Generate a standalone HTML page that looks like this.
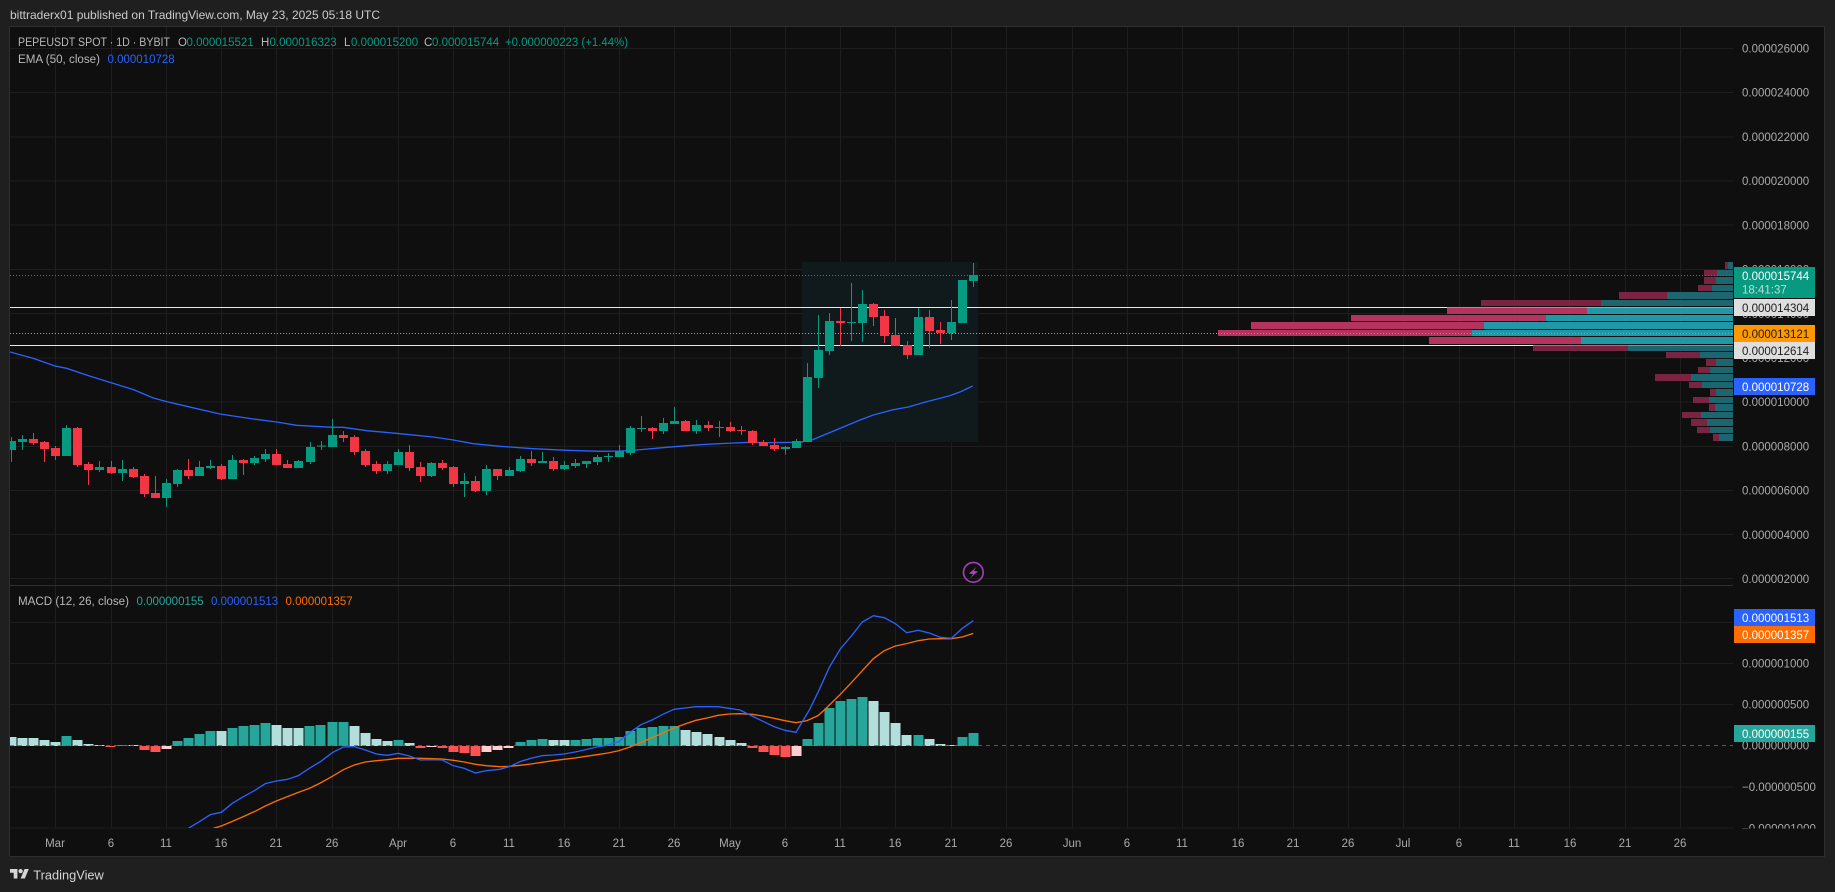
<!DOCTYPE html>
<html lang="en"><head><meta charset="utf-8"><title>PEPEUSDT chart</title>
<style>
html,body{margin:0;padding:0;background:#1f1f1f;width:1835px;height:892px;overflow:hidden}
svg{display:block}
text{font-family:"Liberation Sans",sans-serif;font-size:11.5px;fill:#ababab}
.w{fill:#fff}.k{fill:#1c1c1c}.d{text-anchor:middle}
.g{fill:#089981}.l{fill:#b8b8b8}
</style></head><body>
<svg width="1835" height="892" viewBox="0 0 1835 892" xmlns="http://www.w3.org/2000/svg">
<defs>
<clipPath id="c1"><rect x="30" y="81" width="5169" height="1671"/></clipPath>
<clipPath id="c2"><rect x="30" y="1758" width="5169" height="726"/></clipPath>
<clipPath id="c3"><rect x="1734" y="586" width="90" height="242.5"/></clipPath>
</defs>
<rect width="1835" height="892" fill="#1f1f1f"/>
<rect x="9.5" y="26.5" width="1815" height="830" fill="#0f0f0f" stroke="#2e2e2e"/>
<text x="10" y="19" textLength="370" lengthAdjust="spacingAndGlyphs" style="font-size:12px;fill:#cccccc">bittraderx01 published on TradingView.com, May 23, 2025 05:18 UTC</text>

<g transform="scale(.33333)" fill="none" shape-rendering="crispEdges">
<!-- grid -->
<path stroke="#1e1e1e" stroke-width="3" d="M30 145.500H5199M30 278H5199M30 410.500H5199M30 543H5199M30 675.500H5199M30 808H5199M30 940.500H5199M30 1073.500H5199M30 1206H5199M30 1339H5199M30 1471H5199M30 1604H5199M30 1736H5199M30 1867H5199M30 1990H5199M30 2113H5199M30 2361H5199M30 2484H5199M166 81V2484M334 81V2484M499 81V2484M664 81V2484M829 81V2484M997 81V2484M1195 81V2484M1360 81V2484M1528 81V2484M1693 81V2484M1858 81V2484M2023 81V2484M2191 81V2484M2356 81V2484M2521 81V2484M2686 81V2484M2854 81V2484M3019 81V2484M3217 81V2484M3382 81V2484M3547 81V2484M3715 81V2484M3880 81V2484M4045 81V2484M4210 81V2484M4378 81V2484M4543 81V2484M4708 81V2484M4876 81V2484M5041 81V2484"/>
<path stroke="#2e2e2e" stroke-width="3" d="M30 1756.500H5199"/>
<!-- shaded range -->
<rect x="2406" y="786" width="528" height="540" fill="#10191b"/>
<!-- white lines -->
<path stroke="#e8e8e8" stroke-width="3" d="M30 922.500H5199M30 1036.500H5199"/>
<!-- volume profile: sell -->
<path fill="#7a2441" d="M5175 786h9v21h-9zM5112 810h39v18h-39zM5112 831h36v21h-36zM5094 855h42v18h-42zM4857 876h144v21h-144zM4443 900h360v18h-360zM4599 1035h285v18h-285zM4998 1056h102v18h-102zM5118 1077h30v21h-30zM5094 1101h36v18h-36zM4965 1122h108v21h-108zM5067 1146h39v18h-39zM5130 1167h18v21h-18zM5079 1191h48v18h-48zM5127 1212h18v21h-18zM5046 1236h57v18h-57zM5073 1257h48v21h-48zM5091 1281h39v18h-39zM5139 1302h18v21h-18z"/>
<path fill="#1d6670" d="M5184 786h15v21h-15zM5151 810h48v18h-48zM5148 831h51v21h-51zM5136 855h63v18h-63zM5001 876h198v21h-198zM4803 900h396v18h-396zM4884 1035h315v18h-315zM5100 1056h99v18h-99zM5148 1077h51v21h-51zM5130 1101h69v18h-69zM5073 1122h126v21h-126zM5106 1146h93v18h-93zM5148 1167h51v21h-51zM5127 1191h72v18h-72zM5145 1212h54v21h-54zM5103 1236h96v18h-96zM5121 1257h78v21h-78zM5130 1281h69v18h-69zM5157 1302h42v21h-42z"/>
<path fill="#b5345f" d="M4341 921h420v21h-420zM4053 945h585v18h-585zM3753 966h699v21h-699zM3654 990h762v18h-762zM4287 1011h456v21h-456z"/>
<path fill="#2098a8" d="M4761 921h438v21h-438zM4638 945h561v18h-561zM4452 966h747v21h-747zM4416 990h783v18h-783zM4743 1011h456v21h-456z"/>
<path stroke="#ffffff" stroke-opacity=".35" stroke-width="3" d="M4341 922.500H5199M4599 1036.500H5199"/>
<!-- dotted -->
<path stroke="#089981" stroke-width="3" stroke-dasharray="3 6" d="M30 826.500H5199"/>
<path stroke="#ff9800" stroke-width="3" stroke-dasharray="3 6" d="M30 1000.500H3654"/>
<path stroke="#ffffff" stroke-opacity=".3" stroke-width="3" stroke-dasharray="3 6" d="M3654 1000.500H5199"/>
</g>

<g transform="scale(.33333)" fill="none">
<!-- EMA -->
<g clip-path="url(#c1)">
<polyline stroke="#2962ff" stroke-width="4" points="30,1056 100,1075 165,1098 200,1105 265,1127 330,1147 400,1169 460,1194 500,1205 560,1219 660,1242 760,1257 830,1266 890,1276 997,1282 1030,1282 1100,1292 1200,1301 1300,1311 1360,1320 1420,1331 1500,1339 1600,1346 1700,1351 1800,1354 1860,1353 1910,1350 2000,1342 2100,1334 2200,1329 2250,1327 2300,1328 2400,1327 2436,1320 2460,1310 2520,1285 2580,1260 2620,1245 2680,1229 2725,1221 2770,1208 2850,1187 2880,1176 2918,1158"/>
</g>
</g>

<g transform="scale(.33333)" fill="none" shape-rendering="crispEdges" clip-path="url(#c1)">
<g transform="translate(.5,1230)">
<path stroke="#089981" stroke-width="3" d="M34 81V156M67 75V120M199 45V138M298 153V186M367 150V213M499 207V291M532 177V231M598 153V198M631 150V177M697 135V207M763 138V165M796 117V156M895 150V174M931 96V162M964 93V120M997 27V111M1162 153V192M1195 117V165"/>
<path stroke="#089981" stroke-width="27" d="M34 93V120M67 87V96M199 54V138M298 171V180M367 177V189M499 219V264M532 180V222M598 171V198M631 168V174M697 150V207M763 144V159M796 132V147M895 153V174M931 111V156M964 107V110M997 75V111M1162 162V183M1195 126V165"/>
<path stroke="#f23645" stroke-width="3" d="M100 69V105M133 93V156M166 108V150M232 51V171M265 156V225M334 153V192M400 171V204M433 192V261M466 198V264M565 147V207M664 162V210M730 147V195M829 117V165M862 150V174M1030 63V96M1063 75V135M1096 117V171M1129 153V192"/>
<path stroke="#f23645" stroke-width="27" d="M100 87V99M133 96V117M166 114V138M232 54V165M265 162V180M334 171V189M400 177V201M433 198V252M466 249V264M565 180V198M664 168V207M730 150V159M829 132V165M862 162V174M1030 75V84M1063 81V126M1096 123V165M1129 162V183"/>
</g>
<g transform="translate(1200.500,1200)">
<path stroke="#089981" stroke-width="3" d="M94 186V231M193 219V291M259 195V285M328 201V228M361 168V216M427 156V189M493 183V210M526 177V204M559 183V204M592 165V195M625 159V186M658 135V171M691 78V165M724 48V96M790 54V102M823 21V72M889 60V102M958 63V111"/>
<path stroke="#089981" stroke-width="27" d="M94 189V228M193 243V252M259 207V273M328 210V228M361 177V213M427 183V189M493 195V207M526 189V198M559 183V192M592 171V186M625 168V171M658 155V171M691 84V159M724 84V87M790 69V93M823 63V72M889 75V93M958 81V84"/>
<path stroke="#f23645" stroke-width="3" d="M28 135V213M61 186V246M127 180V210M160 198V261M226 228V276M292 207V240M394 153V198M460 171V213M757 81V117M856 60V93M925 63V93M991 66V96M1024 78V105M1057 90V135M1090 120V138M1123 114V153"/>
<path stroke="#f23645" stroke-width="27" d="M28 156V204M61 201V228M127 189V204M160 201V252M226 243V273M292 207V228M394 177V189M460 183V207M757 84V93M856 63V93M925 75V84M991 81V93M1024 90V93M1057 93V129M1090 126V138M1123 135V147"/>
</g>
<g transform="translate(2340.500,750)">
<path stroke="#089981" stroke-width="3" d="M16 588V614M49 567V594M82 339V576M115 195V414M148 189V315M214 99V273M247 120V276M415 174V315M514 150V270M547 90V219M580 39V111"/>
<path stroke="#089981" stroke-width="27" d="M16 591V597M49 573V594M82 381V576M115 300V384M148 213V303M214 216V219M247 162V219M415 201V315M514 216V249M547 90V219M580 75V93"/>
<path stroke="#f23645" stroke-width="3" d="M181 174V288M280 159V228M313 180V279M346 204V288M382 273V327M448 180V294M481 216V282"/>
<path stroke="#f23645" stroke-width="27" d="M181 213V219M280 162V201M313 198V258M346 255V288M382 285V315M448 201V243M481 240V249"/>
</g>
</g>

<!-- histogram -->
<g transform="scale(.33333)" fill="none" shape-rendering="crispEdges" clip-path="url(#c2)" stroke-width="30">
<g transform="translate(0,2100)">
<path stroke="#26a69a" d="M199 108V138M367 135V138M532 123V138M565 114V138M598 102V138M631 93V138M697 84V138M730 78V138M763 75V138M796 69V138M928 78V138M961 75V138M997 66V138M1030 66V138M1195 120V138"/>
<path stroke="#b2dfdb" d="M34 111V138M67 114V138M100 114V138M133 120V138M166 126V138M232 120V138M265 132V138M298 135V138M400 135V138M664 93V138M829 75V138M862 84V138M895 84V138M1063 78V138M1096 99V138M1129 117V138M1162 123V138M1228 129V138"/>
<path stroke="#ff5252" d="M331 138V141M433 138V150M466 138V156M1261 138V144M1327 138V144M1360 138V156M1393 138V159M1426 138V168"/>
<path stroke="#ffcdd2" d="M499 138V147M1294 138V141M1459 138V156M1492 138V150"/>
</g>
<g transform="translate(1501,2070)">
<path stroke="#26a69a" d="M60 156V168M93 150V168M126 147V168M225 150V168M258 147V168M291 144V168M324 144V168M357 141V168M390 123V168M423 114V168M456 111V168M489 108V168M522 108V168M921 147V168M954 99V168M987 54V168M1020 33V168M1053 27V168M1086 21V168M1254 135V168M1386 141V168M1419 129V168"/>
<path stroke="#b2dfdb" d="M159 150V168M192 150V168M555 120V168M588 126V168M621 132V168M657 141V168M690 150V168M723 159V168M1119 33V168M1152 66V168M1185 99V168M1218 135V168M1287 147V168M1320 162V168M1353 165V168"/>
<path stroke="#ff5252" d="M756 168V174M789 168V186M822 168V195M855 168V201"/>
<path stroke="#ffcdd2" d="M25 168V174M888 168V198"/>
</g>
</g>
<g transform="scale(.33333)" fill="none">
<path stroke="#6a6a6a" stroke-width="3" stroke-dasharray="12 12" stroke-opacity=".8" d="M30 2236.500H5199" shape-rendering="crispEdges"/>
<g clip-path="url(#c2)" stroke-width="4">
<g stroke="#ff6d00">
<polyline transform="translate(0,2100)" points="640,385 664,378 697,364 730,350 763,335 796,318 829,303 862,290 895,277 928,265 961,249 997,229 1030,209 1063,195 1096,186 1129,182 1162,179 1195,175 1228,175 1261,175 1294,176 1327,177 1360,181 1393,186 1426,193 1459,197 1500,200"/>
<polyline transform="translate(1500,2070)" points="0,230 30,229 60,226 93,222 126,217 159,212 192,208 225,204 258,199 291,194 324,189 357,182 390,171 423,157 456,143 489,129 522,114 555,102 588,91 621,84 654,76 687,72 720,71 756,73 789,78 822,85 855,92 888,98 921,92 954,77 973,60"/>
<polyline transform="translate(2340,1680)" points="133,450 181,403 214,368 247,332 280,296 313,272 346,258 380,251 415,242 448,237 481,236 514,236 547,231 580,220"/>
</g>
<g stroke="#2962ff">
<polyline transform="translate(0,2100)" points="565,385 598,365 631,344 664,337 697,310 730,290 763,272 796,251 829,243 862,238 895,227 928,205 961,185 997,158 1030,141 1063,140 1096,150 1129,162 1162,166 1195,160 1228,168 1261,180 1294,179 1327,180 1360,197 1393,205 1426,219 1459,212 1500,208"/>
<polyline transform="translate(1500,2070)" points="0,238 30,229 60,215 93,205 126,197 159,195 192,192 225,186 258,179 291,171 324,165 357,155 390,127 423,104 456,90 489,73 522,58 555,54 588,50 621,50 654,50 687,55 720,60 756,78 789,94 822,110 855,121 888,127 928,60"/>
<polyline transform="translate(2340,1680)" points="88,450 115,395 148,322 181,267 214,228 247,186 280,167 313,173 346,191 380,218 415,211 448,219 481,232 514,235 547,205 580,182"/>
</g>
</g>
<!-- bolt icon -->
<circle cx="2920" cy="1717" r="29.500" stroke="#9c3fb3" stroke-width="5"/>
<path transform="translate(2340,1680)" fill="#a544bb" d="M589 21L567 41L579 42L571 54L594 34L582 33Z"/>
</g>

<!-- legend -->
<text x="18" y="46" textLength="152" lengthAdjust="spacingAndGlyphs" class="l">PEPEUSDT SPOT · 1D · BYBIT</text>
<text x="178" y="46" class="l">O</text><text x="186.500" y="46" class="g">0.000015521</text>
<text x="261" y="46" class="l">H</text><text x="269.500" y="46" class="g">0.000016323</text>
<text x="344" y="46" class="l">L</text><text x="351" y="46" class="g">0.000015200</text>
<text x="424" y="46" class="l">C</text><text x="432" y="46" class="g">0.000015744</text>
<text x="505" y="46" textLength="123" lengthAdjust="spacingAndGlyphs" class="g">+0.000000223 (+1.44%)</text>
<text x="18" y="63" class="l" textLength="82" lengthAdjust="spacingAndGlyphs">EMA (50, close)</text>
<text x="107.500" y="63" style="fill:#2962ff">0.000010728</text>
<text x="18" y="605" class="l" textLength="111" lengthAdjust="spacingAndGlyphs">MACD (12, 26, close)</text>
<text x="136.500" y="605" style="fill:#26a69a">0.000000155</text>
<text x="211" y="605" style="fill:#2962ff">0.000001513</text>
<text x="285.500" y="605" style="fill:#ff6d00">0.000001357</text>

<!-- price axis -->
<text x="1742" y="52.500">0.000026000</text>
<text x="1742" y="96.500">0.000024000</text>
<text x="1742" y="141">0.000022000</text>
<text x="1742" y="185">0.000020000</text>
<text x="1742" y="229.500">0.000018000</text>
<text x="1742" y="273.500">0.000016000</text>
<text x="1742" y="318">0.000014000</text>
<text x="1742" y="362">0.000012000</text>
<text x="1742" y="406">0.000010000</text>
<text x="1742" y="450.500">0.000008000</text>
<text x="1742" y="494.500">0.000006000</text>
<text x="1742" y="539">0.000004000</text>
<text x="1742" y="583">0.000002000</text>
<rect x="1734" y="267" width="81" height="31" fill="#089981"/>
<text x="1742" y="280" class="w">0.000015744</text>
<text x="1742" y="293.500" style="fill:#b5e0d5">18:41:37</text>
<rect x="1734" y="299" width="81" height="17" fill="#dedede"/>
<text x="1742" y="312" class="k">0.000014304</text>
<rect x="1734" y="325" width="81" height="17" fill="#ff9800"/>
<text x="1742" y="338" class="k">0.000013121</text>
<rect x="1734" y="342" width="81" height="17" fill="#dedede"/>
<text x="1742" y="355" class="k">0.000012614</text>
<rect x="1734" y="378" width="81" height="17" fill="#2962ff"/>
<text x="1742" y="391" class="w">0.000010728</text>

<!-- macd axis -->
<g clip-path="url(#c3)">
<text x="1742" y="667.500">0.000001000</text>
<text x="1742" y="708.500">0.000000500</text>
<text x="1742" y="749.500">0.000000000</text>
<text x="1742" y="791">−0.000000500</text>
<text x="1742" y="832.500">−0.000001000</text>
</g>
<rect x="1734" y="609" width="81" height="17" fill="#2962ff"/>
<text x="1742" y="622" class="w">0.000001513</text>
<rect x="1734" y="626" width="81" height="17" fill="#ff6d00"/>
<text x="1742" y="639" class="w">0.000001357</text>
<rect x="1734" y="725" width="81" height="17" fill="#26a69a"/>
<text x="1742" y="738" class="w">0.000000155</text>

<!-- time axis -->
<g>
<text class="d" x="55" y="847">Mar</text><text class="d" x="111" y="847">6</text><text class="d" x="166" y="847">11</text><text class="d" x="221" y="847">16</text><text class="d" x="276" y="847">21</text><text class="d" x="332" y="847">26</text><text class="d" x="398" y="847">Apr</text><text class="d" x="453" y="847">6</text><text class="d" x="509" y="847">11</text><text class="d" x="564" y="847">16</text><text class="d" x="619" y="847">21</text><text class="d" x="674" y="847">26</text><text class="d" x="730" y="847">May</text><text class="d" x="785" y="847">6</text><text class="d" x="840" y="847">11</text><text class="d" x="895" y="847">16</text><text class="d" x="951" y="847">21</text><text class="d" x="1006" y="847">26</text><text class="d" x="1072" y="847">Jun</text><text class="d" x="1127" y="847">6</text><text class="d" x="1182" y="847">11</text><text class="d" x="1238" y="847">16</text><text class="d" x="1293" y="847">21</text><text class="d" x="1348" y="847">26</text><text class="d" x="1403" y="847">Jul</text><text class="d" x="1459" y="847">6</text><text class="d" x="1514" y="847">11</text><text class="d" x="1570" y="847">16</text><text class="d" x="1625" y="847">21</text><text class="d" x="1680" y="847">26</text>
</g>

<!-- footer logo -->
<g transform="translate(10,866.900) scale(.53)" fill="#d6d6d6">
<path d="M14 22H7V11H0V4h14v18zM28 22h-8l7.500-18h8L28 22z"/><circle cx="20" cy="8" r="4"/>
</g>
<text x="33.300" y="879.500" textLength="70.500" lengthAdjust="spacingAndGlyphs" style="font-size:13px;fill:#d6d6d6">TradingView</text>
</svg>
</body></html>
